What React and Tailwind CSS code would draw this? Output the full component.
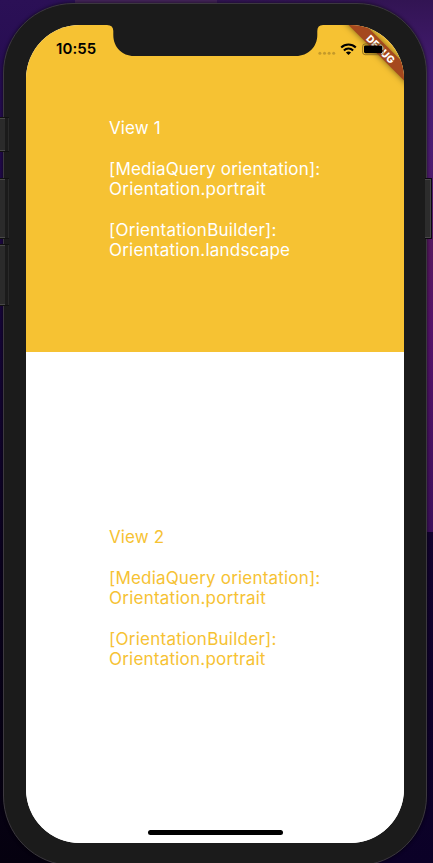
function SignalDots() {
  return (
    <svg width="18" height="14" viewBox="0 0 18 14" fill="#c49a2a">
      <circle cx="1.9" cy="11.3" r="1.5" />
      <circle cx="6.5" cy="11.3" r="1.5" />
      <circle cx="11.1" cy="11.3" r="1.5" />
      <circle cx="15.7" cy="11.3" r="1.5" />
    </svg>
  );
}

function Wifi() {
  return (
    <svg width="17" height="14" viewBox="0 0 17 14">
      <g fill="none" stroke="#000" strokeWidth="2.1">
        <path d="M1.2 5.4 A10.6 10.6 0 0 1 15.8 5.4" />
        <path d="M3.9 8.4 A6.6 6.6 0 0 1 13.1 8.4" />
      </g>
      <path d="M5.9 10.5 Q8.5 8.6 11.1 10.5 L8.5 13.1 Z" fill="#000" />
    </svg>
  );
}

function Battery() {
  return (
    <svg width="22" height="14" viewBox="0 0 22 14">
      <rect x="0.6" y="1.9" width="20.8" height="10.8" rx="2.6" fill="none" stroke="#69501b" strokeWidth="0.9" opacity="0.75" />
      <rect x="2" y="3.4" width="18.4" height="7.8" rx="1.4" fill="#000" />
    </svg>
  );
}

function Notch() {
  return (
    <svg className="shrink-0" width="216" height="32" viewBox="0 0 216 32">
      <path
        d="M0 -1 V0 Q6.3 0 6.3 6 V10 C6.3 22 15 31 27 31 H189 C201 31 210.3 22 210.3 10 V6 Q210.3 0 216 0 V-1 Z"
        fill="#1b1b1b"
      />
    </svg>
  );
}

function StatusBar() {
  return (
    <header className="z-20 flex items-start [grid-area:1/1]">
      <time className="w-[81px] pl-[30px] pt-[15px] text-[15px] font-semibold leading-[18px] tracking-[0.1px] text-black">
        10:55
      </time>
      <Notch />
      <div className="-ml-[5px] flex pt-[16.5px]">
        <SignalDots />
        <div className="pl-1">
          <Wifi />
        </div>
        <div className="pl-[5px]">
          <Battery />
        </div>
      </div>
    </header>
  );
}

function View({ title, builder }) {
  return (
    <div className="flex flex-col gap-[20.4px] whitespace-nowrap text-[17px] leading-[20.4px]">
      <p className="tracking-[0.1px]">{title}</p>
      <p>
        <span className="tracking-[0.19px]">[MediaQuery orientation]:</span>
        <br />
        <span className="tracking-[0.24px]">Orientation.portrait</span>
      </p>
      <p>
        <span className="tracking-[0.26px]">[OrientationBuilder]:</span>
        <br />
        <span className="tracking-[0.22px]">{builder}</span>
      </p>
    </div>
  );
}

function Backdrop() {
  return (
    <div className="grid grid-cols-2 [grid-area:1/1]">
      <div className="flex flex-col items-end bg-[linear-gradient(180deg,#2b1056_0px,#240b50_120px,#160539_330px,#0b0220_560px,#05010f_863px)]">
        <div className="h-2 w-[142px] bg-[#432358]" />
      </div>
      <div className="flex flex-col">
        <div className="h-[532px] bg-[linear-gradient(180deg,#321453_0px,#431b70_70px,#4b1c73_150px,#561860_250px,#54136a_330px,#3c105b_532px)]" />
        <div className="flex-1 bg-[linear-gradient(180deg,#12032e,#0b0127)]" />
      </div>
    </div>
  );
}

function SideButton({ size }) {
  return (
    <div className={`flex w-[9px] border-y border-y-[#111] ${size}`}>
      <div className="w-[5px] border-y border-[#484848] bg-[#2b2b2b]" />
      <div className="flex-1 border-r border-[#2a2a2a] bg-[#1b1b1b]" />
    </div>
  );
}

function Buttons() {
  return (
    <div className="z-10 flex items-start justify-between [grid-area:1/1]">
      <div className="flex flex-col pt-[117px]">
        <SideButton size="h-[35px]" />
        <div className="pt-[26px]">
          <SideButton size="h-[61px]" />
        </div>
        <div className="pt-[5px]">
          <SideButton size="h-[62px]" />
        </div>
      </div>
      <div className="pr-px pt-[178px]">
        <div className="h-[61px] w-[7px] border border-l-0 border-[#0c0711] bg-[#2c2c2c]">
          <div className="h-full border border-l-0 border-[#484848]" />
        </div>
      </div>
    </div>
  );
}

export default function App() {
  return (
    <div className="grid h-[863px] w-[433px] grid-cols-1 grid-rows-1 overflow-hidden font-[Inter,sans-serif]">
      <Backdrop />
      <div className="h-[863px] pl-[3px] pt-[3px] [grid-area:1/1]">
        <div className="h-[863px] w-[424px] rounded-[70px] border border-[#3c383f] bg-[#1b1b1b] pl-[22px] pt-[21px] shadow-[0_0_3px_1px_rgba(0,0,0,0.4)]">
          <main className="relative grid h-[818px] w-[378px] grid-cols-1 grid-rows-1 overflow-hidden rounded-[54px] bg-white">
            <div className="flex flex-col [grid-area:1/1]">
              <section className="h-[327px] bg-[#f6c233] pl-[83px] pt-[93px] text-white">
                <View title="View 1" builder="Orientation.landscape" />
              </section>
              <section className="flex-1 bg-white pl-[83px] pt-[175px] text-[#f6c233]">
                <View title="View 2" builder="Orientation.portrait" />
              </section>
            </div>
            <StatusBar />
            <div className="absolute -right-[27.2px] top-[17.5px] z-10 flex h-3 w-[100px] rotate-45 items-center justify-center bg-[#a5481e] text-[10px] font-extrabold leading-none tracking-[0.2px] text-white shadow-[0_0_6px_0_rgba(0,0,0,0.5)]">
              DEBUG
            </div>
            <div className="mb-2 h-[5px] w-[135px] self-end justify-self-center rounded-full bg-black [grid-area:1/1]" />
          </main>
        </div>
      </div>
      <Buttons />
    </div>
  );
}
